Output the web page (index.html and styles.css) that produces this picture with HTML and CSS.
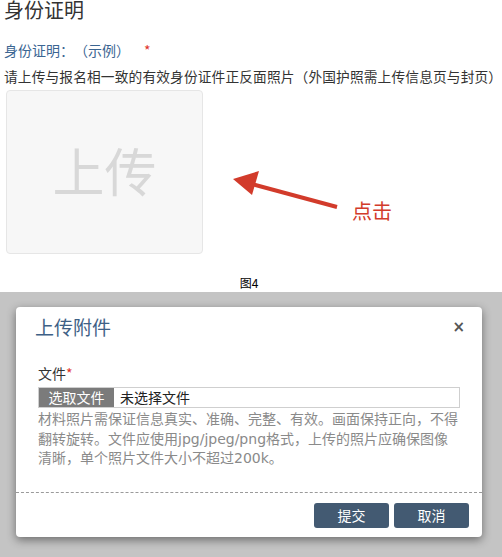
FILE: index.html
```html
<!DOCTYPE html>
<html lang="zh-CN">
<head>
<meta charset="utf-8">
<title>身份证明</title>
<link rel="stylesheet" href="styles.css">
</head>
<body>
<div class="top">
  <h1 class="title">身份证明</h1>
  <div class="label">身份证明：（示例）<span class="star">*</span></div>
  <div class="hint">请上传与报名相一致的有效身份证件正反面照片（外国护照需上传信息页与封页）</div>
  <div class="row">
    <div class="upload">上传</div>
    <svg class="arrow" width="114" height="42" viewBox="0 0 114 42">
      <line x1="109" y1="37" x2="20" y2="13" stroke="#d23b2b" stroke-width="4" stroke-linecap="butt"/>
      <polygon points="5,9 31,1 24,25" fill="#d23b2b"/>
    </svg>
    <span class="click">点击</span>
  </div>
  <div class="caption">图4</div>
</div>
<div class="overlay">
  <div class="modal">
    <div class="modal-head">
      <span class="modal-title">上传附件</span>
      <span class="close">×</span>
    </div>
    <div class="modal-body">
      <div class="field-label">文件<span class="req">*</span></div>
      <div class="file-input"><span class="file-btn">选取文件</span><span class="file-name">未选择文件</span></div>
      <div class="help">材料照片需保证信息真实、准确、完整、有效。画面保持正向，不得翻转旋转。文件应使用jpg/jpeg/png格式，上传的照片应确保图像清晰，单个照片文件大小不超过200k。</div>
    </div>
    <div class="modal-foot">
      <button class="btn">提交</button>
      <button class="btn">取消</button>
    </div>
  </div>
</div>
</body>
</html>
```
FILE: styles.css
```css
* { box-sizing: border-box; }
html, body { margin: 0; padding: 0; }
body {
  width: 502px;
  height: 557px;
  overflow: hidden;
  font-family: "Noto Sans CJK SC", "Noto Sans", sans-serif;
  color: #333;
  background: #fff;
  text-spacing-trim: space-all;
}
.top {
  height: 292px;
  overflow: hidden;
  padding-left: 4px;
}
.title {
  margin: 0;
  font-size: 20px;
  line-height: 20px;
  font-weight: normal;
  color: #333;
}
.label {
  margin-top: 20px;
  font-size: 14px;
  line-height: 20px;
  color: #3b6592;
}
.star {
  color: #e0332b;
  margin-left: 14px;
}
.hint {
  margin-top: 7px;
  font-size: 13.7px;
  line-height: 18px;
  color: #333;
  white-space: nowrap;
  letter-spacing: 0.15px;
}
.row {
  display: flex;
  align-items: flex-start;
  margin-top: 5px;
  margin-left: 2px;
}
.upload {
  width: 197px;
  height: 164px;
  background: #f7f7f7;
  border: 1px solid #e6e6e6;
  border-radius: 4px;
  display: flex;
  align-items: center;
  justify-content: center;
  font-size: 52px;
  color: #d8d8d8;
  padding-bottom: 6px;
}
.arrow {
  margin-left: 25px;
  margin-top: 80px;
}
.click {
  margin-left: 10px;
  margin-top: 109px;
  font-size: 20px;
  line-height: 24px;
  color: #d23b2b;
}
.caption {
  margin-top: 22px;
  text-align: center;
  font-size: 12px;
  line-height: 14px;
  color: #000;
  padding-right: 8px;
}
.overlay {
  height: 265px;
  background: #c4c4c4;
  padding-top: 15px;
  padding-left: 16px;
}
.modal {
  width: 466px;
  height: 230px;
  background: #fff;
  border-radius: 4px;
  box-shadow: 0 3px 10px rgba(0, 0, 0, 0.45);
  display: flex;
  flex-direction: column;
}
.modal-head {
  height: 56px;
  padding: 8px 14px 0 19px;
  display: flex;
  justify-content: space-between;
  align-items: flex-start;
}
.modal-title {
  font-size: 19px;
  line-height: 24px;
  color: #3e6086;
}
.close {
  font-family: "DejaVu Sans", sans-serif;
  font-size: 15px;
  line-height: 18px;
  font-weight: bold;
  color: #555;
  margin-top: 3px;
  margin-right: 3px;
}
.modal-body {
  height: 129px;
  padding-left: 22px;
}
.field-label {
  font-size: 14px;
  line-height: 20px;
  color: #333;
}
.req { color: #e0332b; }
.file-input {
  margin-top: 4px;
  width: 422px;
  height: 21px;
  border: 1px solid #cfcfcf;
  display: flex;
  align-items: center;
  font-size: 14px;
}
.file-btn {
  width: 75px;
  height: 19px;
  background: #7b7b7b;
  color: #fff;
  line-height: 19px;
  text-align: center;
}
.file-name {
  margin-left: 6px;
  color: #222;
  line-height: 19px;
}
.help {
  margin-top: 2px;
  width: 424px;
  font-family: "DejaVu Sans", "Noto Sans CJK SC", sans-serif;
  font-size: 14px;
  line-height: 19.5px;
  color: #8a8a8a;
}
.modal-foot {
  border-top: 1px dashed #9a9a9a;
  padding: 10px 13px 0 0;
  display: flex;
  justify-content: flex-end;
  gap: 5px;
}
.btn {
  width: 75px;
  height: 25px;
  border: none;
  border-radius: 3px;
  background: #435a72;
  color: #fff;
  font-family: "Noto Sans CJK SC", sans-serif;
  font-size: 14px;
  padding: 0;
  line-height: 25px;
}
```
